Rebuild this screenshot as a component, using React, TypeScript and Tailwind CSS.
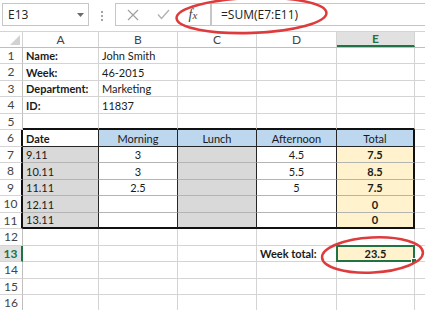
import React from 'react';

interface CellData {
  t?: string;
  b?: boolean;
  c?: boolean;
  bg?: string;
}

const GRAY = 'bg-[#d9d9d9]';
const BLUE = 'bg-[#bdd7ee]';
const YELLOW = 'bg-[#fff2cc]';

const colWidths = ['w-[76px]', 'w-[79px]', 'w-[79px]', 'w-[80px]', 'w-[78px]'];
const colLetters = ['A', 'B', 'C', 'D', 'E'];

const dayRow = (date: string, morning: string, afternoon: string, total: string): CellData[] => [
  { t: date, bg: GRAY },
  { t: morning, c: true },
  { bg: GRAY },
  { t: afternoon, c: true },
  { t: total, b: true, c: true, bg: YELLOW },
];

// rows 1..16, columns A..E
const sheet: CellData[][] = [
  [{ t: 'Name:', b: true }, { t: 'John Smith' }, {}, {}, {}],
  [{ t: 'Week:', b: true }, { t: '46-2015' }, {}, {}, {}],
  [{ t: 'Department:', b: true }, { t: 'Marketing' }, {}, {}, {}],
  [{ t: 'ID:', b: true }, { t: '11837' }, {}, {}, {}],
  [{}, {}, {}, {}, {}],
  [
    { t: 'Date', b: true },
    { t: 'Morning', c: true, bg: BLUE },
    { t: 'Lunch', c: true, bg: BLUE },
    { t: 'Afternoon', c: true, bg: BLUE },
    { t: 'Total', c: true, bg: BLUE },
  ],
  dayRow('9.11', '3', '4.5', '7.5'),
  dayRow('10.11', '3', '5.5', '8.5'),
  dayRow('11.11', '2.5', '5', '7.5'),
  dayRow('12.11', '', '', '0'),
  dayRow('13.11', '', '', '0'),
  [{}, {}, {}, {}, {}],
  [{}, {}, {}, { t: 'Week total:', b: true }, { t: '23.5', b: true, c: true, bg: YELLOW }],
  [{}, {}, {}, {}, {}],
  [{}, {}, {}, {}, {}],
  [{}, {}, {}, {}, {}],
];

function cellBorders(row: number, col: number) {
  let right = 'border-r border-r-[#d4d4d4]';
  let bottom = 'border-b border-b-[#d4d4d4]';
  if (row >= 6 && row <= 11) {
    right = col === 4 ? 'border-r-2 border-r-[#111]' : 'border-r border-r-[#262626]';
    if (row === 11) bottom = 'border-b-2 border-b-[#111]';
    else if (row === 6) bottom = 'border-b border-b-[#262626]';
    else bottom = 'border-b border-b-[#b4b4b4]';
  }
  if (row === 5) bottom = 'border-b-2 border-b-[#111]';
  return `${right} ${bottom}`;
}

const FormulaBar = () => (
  <div className="flex h-[32px] items-start border-b border-[#d4d4d4] pt-[3px] font-['Open_Sans',sans-serif]">
    <div className="ml-[2px] flex h-[23px] w-[87px] items-center justify-between border border-[#c6c6c6] pl-[5px] pr-[4px] text-[12px] text-[#222]">
      <span>E13</span>
      <svg width="7" height="4" viewBox="0 0 7 4">
        <path d="M0 0 L7 0 L3.5 4 Z" fill="#6b6b6b" />
      </svg>
    </div>
    <div className="flex w-[26px] flex-col items-center justify-center gap-[2px] pt-[8px]">
      <span className="h-[2px] w-[2px] bg-[#a6a6a6]" />
      <span className="h-[2px] w-[2px] bg-[#a6a6a6]" />
      <span className="h-[2px] w-[2px] bg-[#a6a6a6]" />
    </div>
    <div className="flex h-[23px] w-[96px] items-center border border-[#c6c6c6]">
      <div className="flex w-[33px] justify-center">
        <svg width="12" height="12" viewBox="0 0 12 12">
          <path d="M1 1 L11 11 M11 1 L1 11" stroke="#a0a0a0" strokeWidth="1.2" />
        </svg>
      </div>
      <div className="flex w-[28px] justify-center">
        <svg width="13" height="11" viewBox="0 0 13 11">
          <path d="M1 5.5 L4.5 9.5 L12 1" fill="none" stroke="#b0b0b0" strokeWidth="1.3" />
        </svg>
      </div>
      <div className="flex w-[32px] justify-center">
        <span className="font-['Liberation_Serif',serif] text-[14px] italic leading-none text-[#444]">
          f<span className="text-[11px]">x</span>
        </span>
      </div>
    </div>
    <div className="flex h-[23px] flex-1 items-center border border-r-0 border-[#c6c6c6] pl-[9px] text-[12px] text-[#222]">
      =SUM(E7:E11)
    </div>
  </div>
);

const ColumnHeaders = () => (
  <div className="flex h-[16px] border-b border-[#bfbfbf] font-['Lato',sans-serif] text-[12px] text-[#444]">
    <div className="relative w-[23px] shrink-0 border-r border-[#d4d4d4]">
      <svg className="absolute bottom-[2px] right-[2px]" width="10" height="10" viewBox="0 0 10 10">
        <path d="M10 0 L10 10 L0 10 Z" fill="#d2d2d2" />
      </svg>
    </div>
    {colLetters.map((l, i) =>
      l === 'E' ? (
        <div
          key={l}
          className={`${colWidths[i]} flex shrink-0 items-center justify-center border-r border-b-2 border-r-[#d4d4d4] border-b-[#217346] bg-[#e1e1e1] font-bold text-[#217346]`}
        >
          {l}
        </div>
      ) : (
        <div key={l} className={`${colWidths[i]} flex shrink-0 items-center justify-center border-r border-[#d4d4d4]`}>
          {l}
        </div>
      )
    )}
    <div className="flex-1" />
  </div>
);

const Row = ({ cells, row }: { cells: CellData[]; row: number }) => {
  const h = row % 2 === 1 ? 'h-[16px]' : 'h-[17px]';
  const selected = row === 13;
  const inTable = row >= 6 && row <= 11;
  const headerBorder = selected
    ? 'border-r-2 border-r-[#217346] border-b border-b-[#d4d4d4] bg-[#e1e1e1] font-bold text-[#217346]'
    : inTable
    ? 'border-r-2 border-r-[#111] border-b border-b-[#d4d4d4] text-[#444]'
    : 'border-r border-r-[#bfbfbf] border-b border-b-[#d4d4d4] text-[#444]';
  return (
    <div className={`flex ${h}`}>
      <div className={`flex w-[23px] shrink-0 items-center justify-center text-[12px] ${headerBorder}`}>{row}</div>
      {cells.map((cell, i) => (
        <div
          key={i}
          className={`relative flex shrink-0 items-end overflow-visible whitespace-nowrap px-[3px] pb-[1px] text-[11px] leading-[13px] text-[#1a1a1a] ${colWidths[i]} ${cellBorders(row, i)} ${cell.bg ?? ''} ${cell.c ? 'justify-center' : ''} ${cell.b ? 'font-bold' : ''}`}
        >
          {cell.t}
          {selected && i === 4 && (
            <>
              <div className="pointer-events-none absolute -left-px -top-px -bottom-px -right-px border-2 border-[#217346]" />
              <div className="absolute -bottom-[3px] -right-[3px] h-[6px] w-[6px] border border-white bg-[#217346]" />
            </>
          )}
        </div>
      ))}
      <div className="flex-1 border-b border-[#d4d4d4]" />
    </div>
  );
};

export default function App() {
  return (
    <div className="relative h-[310px] w-[425px] overflow-hidden bg-white">
      <FormulaBar />
      <div className="font-['Lato',sans-serif]">
        <ColumnHeaders />
        {sheet.map((cells, i) => (
          <Row key={i} cells={cells} row={i + 1} />
        ))}
      </div>
      <svg className="pointer-events-none absolute left-0 top-0" width="425" height="310">
        <ellipse cx="251.5" cy="15.5" rx="75" ry="17.5" fill="none" stroke="#de3b3d" strokeWidth="2.5" transform="rotate(-2 251.5 15.5)" />
        <ellipse cx="372.5" cy="255" rx="50.5" ry="17.5" fill="none" stroke="#de3b3d" strokeWidth="2.5" transform="rotate(-3 372.5 255)" />
      </svg>
    </div>
  );
}
